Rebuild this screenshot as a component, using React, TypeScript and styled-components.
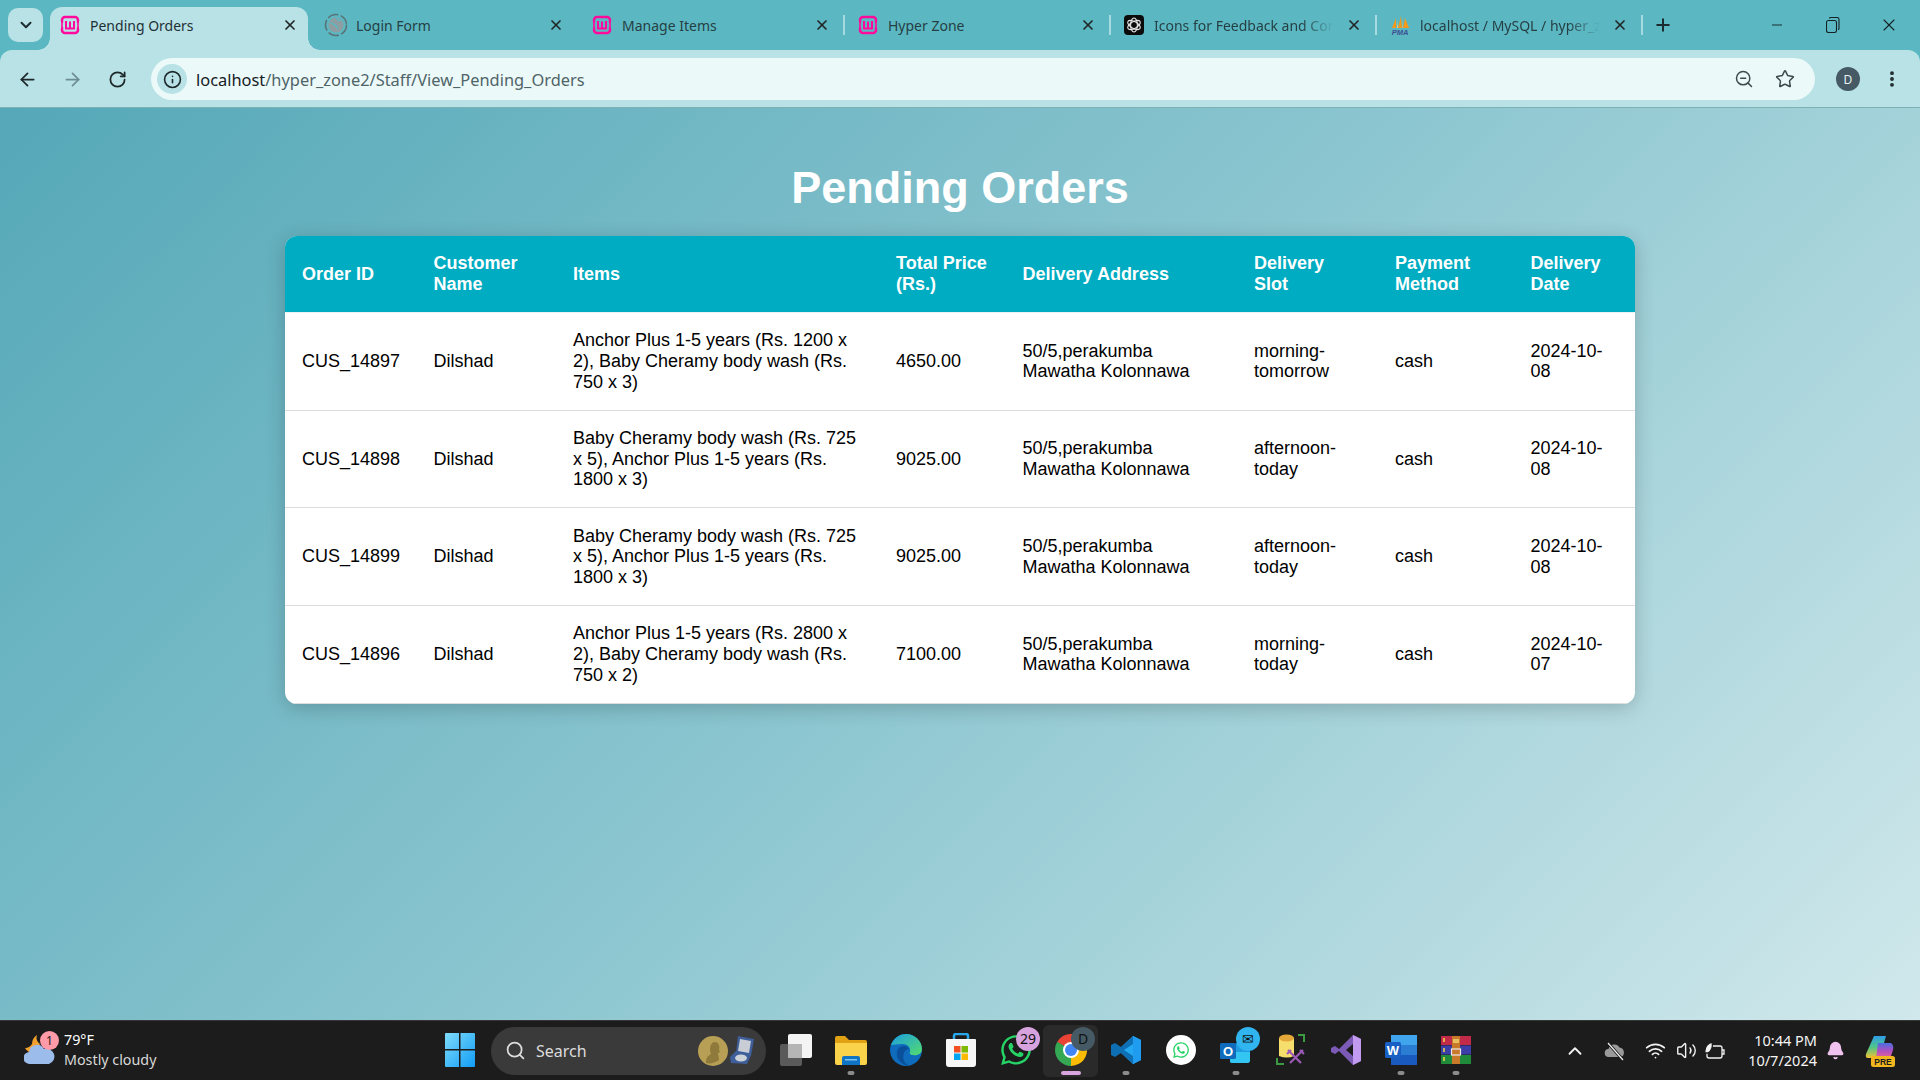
import React from "react"
import styled, { createGlobalStyle } from "styled-components"
import {
    ArrowLeft,
    ArrowRight,
    Bell,
    ChevronDown,
    ChevronUp,
    EllipsisVertical,
    Info,
    Minus,
    Plus,
    RotateCw,
    Search,
    Star,
    Volume2,
    Wifi,
    X,
    ZoomOut,
} from "lucide-react"
import { FaWhatsapp } from "react-icons/fa"

const GlobalStyle = createGlobalStyle`
    html, body {
        margin: 0;
        padding: 0;
        height: 100%;
        overflow: hidden;
    }
    * {
        box-sizing: border-box;
    }
`

const Shell = styled.div`
    width: 1920px;
    height: 1080px;
    display: flex;
    flex-direction: column;
    font-family: "Noto Sans", "Open Sans", sans-serif;
`

/* browser chrome */
const Chrome = styled.div`
    background: #5bb8c2;
`

const TabStrip = styled.div`
    height: 50px;
    display: flex;
    align-items: stretch;
    padding-right: 3px;
`

const TabSearch = styled.div`
    width: 35px;
    height: 34px;
    margin: 8px 3px 8px 8px;
    border-radius: 10px;
    background: #b8e2e6;
    color: #1d2b2e;
    display: flex;
    align-items: center;
    justify-content: center;
`

const Tab = styled.div<{ $active?: boolean; $sep?: boolean }>`
    position: relative;
    width: 266px;
    padding: 0 14px;
    display: flex;
    align-items: center;
    gap: 10px;
    color: ${(p) => (p.$active ? "#1f3034" : "#263f44")};

    &::before {
        content: "";
        display: ${(p) => (p.$active ? "block" : "none")};
        position: absolute;
        left: 4px;
        right: 4px;
        top: 7px;
        bottom: 0;
        background: #b8e2e6;
        border-radius: 12px 12px 0 0;
    }

    &::after {
        content: "";
        display: ${(p) => (p.$sep ? "block" : "none")};
        position: absolute;
        right: -1px;
        top: 15px;
        width: 2px;
        height: 20px;
        background: #a5dbe0;
    }

    & > * {
        position: relative;
    }
`

const Flare = styled.span<{ $side: "left" | "right" }>`
    && {
        position: absolute;
    }
    bottom: 0;
    ${(p) => (p.$side === "left" ? "left: -8px;" : "right: -8px;")}
    width: 12px;
    height: 12px;
    background: radial-gradient(
        circle at ${(p) => (p.$side === "left" ? "0 0" : "100% 0")},
        transparent 11.5px,
        #b8e2e6 12px
    );
`

const TabTitle = styled.span<{ $fade?: boolean }>`
    flex: 1;
    min-width: 0;
    font-size: 14px;
    white-space: nowrap;
    overflow: hidden;
    margin-right: 2px;
    ${(p) =>
        p.$fade
            ? "-webkit-mask-image: linear-gradient(to right, #000 82%, transparent 100%); mask-image: linear-gradient(to right, #000 82%, transparent 100%);"
            : ""}
`

const TabClose = styled(X)`
    flex: none;
    color: #22282a;
`

const NewTab = styled.div`
    width: 42px;
    display: flex;
    align-items: center;
    justify-content: center;
    color: #1c2b2e;
`

const WindowControls = styled.div`
    margin-left: auto;
    display: flex;
`

const WindowButton = styled.div`
    width: 56px;
    display: flex;
    align-items: center;
    justify-content: center;
    color: #142225;
`

const Toolbar = styled.div`
    height: 58px;
    background: #b8e2e6;
    border-radius: 12px 12px 0 0;
    border-bottom: 1px solid #7fb0b6;
    display: flex;
    align-items: center;
    padding: 1px 5px 0;
`

const NavButton = styled.div<{ $dim?: boolean }>`
    width: 45px;
    height: 40px;
    display: flex;
    align-items: center;
    justify-content: center;
    color: ${(p) => (p.$dim ? "#6d8d92" : "#1d2729")};
`

const Omnibox = styled.div`
    width: 1664px;
    height: 42px;
    margin-left: 11px;
    border-radius: 21px;
    background: #ecf9f9;
    display: flex;
    align-items: center;
    padding: 0 10px 0 6px;
`

const SiteInfo = styled.div`
    width: 30px;
    height: 30px;
    border-radius: 50%;
    background: #b8e2e6;
    color: #1d2729;
    display: flex;
    align-items: center;
    justify-content: center;
`

const Url = styled.div`
    flex: 1;
    margin-left: 9px;
    font-size: 16.4px;
    color: #4f6468;

    b {
        font-weight: 400;
        color: #15201f;
    }
`

const OmniAction = styled.div`
    width: 41px;
    display: flex;
    justify-content: center;
    color: #3e4b4e;
`

const Avatar = styled.div`
    width: 24px;
    height: 24px;
    margin-left: 21px;
    border-radius: 50%;
    background: #455a64;
    color: #e8f2f3;
    font-size: 12px;
    display: flex;
    align-items: center;
    justify-content: center;
`

const MenuButton = styled.div`
    width: 40px;
    margin-left: 12px;
    display: flex;
    justify-content: center;
    color: #1d2729;
`

/* page */
const Page = styled.main`
    flex: 1;
    min-height: 0;
    padding-top: 53px;
    background: linear-gradient(135deg, #55a8b8 0%, #8cc6d0 50%, #d0e8eb 100%);
    font-family: "Liberation Sans", Arial, sans-serif;
`

const Heading = styled.h1`
    margin: 0 0 21px;
    text-align: center;
    font-size: 45px;
    line-height: 54px;
    font-weight: 700;
    color: #ffffff;
`

const TableCard = styled.div`
    width: 1350px;
    margin: 0 auto;
    background: #ffffff;
    border-radius: 12px;
    overflow: hidden;
    box-shadow: 0 4px 20px rgba(0, 0, 0, 0.2);
`

const OrdersTable = styled.table`
    width: 100%;
    table-layout: fixed;
    border-collapse: collapse;
    font-size: 18px;
    line-height: 20.7px;
`

const HeadCell = styled.th`
    padding: 17px;
    background: #00acc1;
    color: #ffffff;
    font-weight: 700;
    line-height: 21px;
    text-align: left;
    border-bottom: 1px solid #e7f3f5;
    height: 76px;
`

const Row = styled.tr`
    td {
        border-bottom: 1px solid #dddddd;
    }
`

const Cell = styled.td`
    padding: 17.3px 17px;
    color: #000000;
    text-align: left;
    vertical-align: middle;
`

/* taskbar */
const Taskbar = styled.footer`
    height: 60px;
    background: #1c1c1c;
    border-top: 1px solid #363636;
    display: flex;
    align-items: center;
    padding-right: 13px;
    color: #ffffff;
`

const Weather = styled.div`
    width: 432px;
    height: 100%;
    padding-left: 24px;
    display: flex;
    align-items: center;
    gap: 9px;
`

const WeatherIcon = styled.div`
    position: relative;
    width: 31px;
    height: 38px;
`

const WeatherBadge = styled.span`
    position: absolute;
    top: -1px;
    right: -4px;
    width: 19px;
    height: 19px;
    border-radius: 50%;
    background: #ff9aa8;
    color: #1a1a1a;
    font-size: 12px;
    line-height: 19px;
    text-align: center;
`

const WeatherText = styled.div`
    font-size: 14.3px;
    line-height: 20px;
    margin-top: -2px;
    color: #d8d8d8;

    b {
        display: block;
        font-weight: 400;
        color: #ffffff;
    }
`

const Dock = styled.div`
    display: flex;
    align-items: center;
    height: 100%;
`

const DockItem = styled.div<{ $active?: boolean }>`
    position: relative;
    width: 55px;
    height: 52px;
    border-radius: 6px;
    display: flex;
    align-items: center;
    justify-content: center;
    background: ${(p) => (p.$active ? "#2a2a2a" : "transparent")};
    padding-bottom: 2px;
`

const RunDot = styled.span<{ $active?: boolean }>`
    position: absolute;
    bottom: 2px;
    left: 50%;
    transform: translateX(-50%);
    width: ${(p) => (p.$active ? "20px" : "7px")};
    height: 4px;
    border-radius: 2px;
    background: ${(p) => (p.$active ? "#d9a5e0" : "#8c8c8c")};
`

const CountBadge = styled.span<{ $bg: string }>`
    position: absolute;
    top: 2px;
    right: 3px;
    min-width: 24px;
    height: 24px;
    border-radius: 50%;
    background: ${(p) => p.$bg};
    color: #111111;
    font-size: 14px;
    line-height: 24px;
    text-align: center;
    display: flex;
    align-items: center;
    justify-content: center;
`

const SearchBox = styled.div`
    width: 275px;
    height: 48px;
    margin: 0 2px 0 4px;
    border-radius: 24px;
    background: #3a3a3a;
    display: flex;
    align-items: center;
    padding: 0 8px 0 14px;
    gap: 10px;
    font-size: 16px;
    color: #dcdcdc;
`

const SearchLabel = styled.span`
    flex: 1;
`

const Tray = styled.div`
    margin-left: auto;
    display: flex;
    align-items: center;
    height: 100%;
`

const TrayIcon = styled.div<{ $w: number }>`
    width: ${(p) => p.$w}px;
    display: flex;
    justify-content: center;
    color: #f2f2f2;
`

const Clock = styled.div`
    width: 89px;
    font-size: 14.5px;
    line-height: 20px;
    margin-top: -1px;
    text-align: right;
    white-space: nowrap;
    color: #f5f5f5;
`

/* logo drawings */
const WampIcon = () => (
    <svg width="20" height="20" viewBox="0 0 20 20" style={{ flex: "none" }}>
        <path
            d="M2 6V5a3 3 0 0 1 3-3h10a3 3 0 0 1 3 3v1M2 14v1a3 3 0 0 0 3 3h10a3 3 0 0 0 3-3v-1M1 6.5h2.2M16.8 6.5H19M1 13.5h2.2M16.8 13.5H19"
            fill="none"
            stroke="#ff0a9c"
            strokeWidth="2.500"
        />
        <path d="M2 6v8M18 6v8" stroke="#ff0a9c" strokeWidth="1.600" />
        <path d="M6 6v7.500h8V6M10 6.500v7" fill="none" stroke="#ff0a9c" strokeWidth="2" />
    </svg>
)

const LoadingIcon = () => (
    <svg width="24" height="24" viewBox="0 0 24 24" style={{ flex: "none", margin: "0 -2px" }}>
        <circle cx="12" cy="12" r="10.5" fill="none" stroke="#5b7377" strokeWidth="1.6" strokeDasharray="11 2.5" />
        <circle cx="12" cy="12" r="7.5" fill="#8d9ea2" />
        <path d="M6 10c3-1 3 2 5 2s1 3 3 4M13 5c-1 2 2 3 4 2" fill="none" stroke="#5bb8c2" strokeWidth="1.4" />
    </svg>
)

const GptIcon = () => (
    <svg width="20" height="20" viewBox="0 0 20 20" style={{ flex: "none" }}>
        <rect width="20" height="20" rx="4" fill="#0b0b0b" />
        <g fill="none" stroke="#e6e6e6" strokeWidth="1.1">
            <ellipse cx="10" cy="10" rx="3.4" ry="7" />
            <ellipse cx="10" cy="10" rx="3.4" ry="7" transform="rotate(60 10 10)" />
            <ellipse cx="10" cy="10" rx="3.4" ry="7" transform="rotate(120 10 10)" />
        </g>
    </svg>
)

const PmaIcon = () => (
    <svg width="22" height="20" viewBox="0 0 22 20" style={{ flex: "none", margin: "0 -1px" }}>
        <path d="M3 13 7 3v10zM9 13l3-12 1 12zM14 13l2-10 4 10z" fill="#f39a1d" />
        <path d="M8 13l1-7v7zM13.5 13l.5-9v9z" fill="#ffd27a" />
        <text x="11" y="19.5" textAnchor="middle" fontFamily="Liberation Sans" fontSize="7.5" fontWeight="700" fontStyle="italic" fill="#3d4e93">
            PMA
        </text>
    </svg>
)

const RestoreIcon = () => (
    <svg width="14" height="16" viewBox="0 0 14 16" fill="none" stroke="#142225" strokeWidth="1.1">
        <rect x="0.5" y="3.5" width="10" height="12" rx="2" />
        <path d="M3.5 1.5q0-1 1-1h6.5q2 0 2 2v9q0 1-1 1" />
    </svg>
)

const WeatherGlyph = () => (
    <svg width="31" height="38" viewBox="0 0 31 38">
        <path d="M1 16a10 10 0 0 0 9 5l6-9a8 8 0 0 1-3-9 11 11 0 0 0-5 9 9 9 0 0 1-7 4z" fill="#f2a12e" />
        <path d="M6 32a6 6 0 0 1-1-12 8 8 0 0 1 15-3 7.500 7.500 0 0 1 5 15z" fill="#9cbcec" />
    </svg>
)

const WindowsLogo = () => (
    <svg width="30" height="36" viewBox="0 0 30 36">
        <defs>
            <linearGradient id="win" x1="0" y1="0" x2="1" y2="1">
                <stop offset="0" stopColor="#7fdcfb" />
                <stop offset="1" stopColor="#119cf5" />
            </linearGradient>
        </defs>
        <path d="M0 2q0-1 1-1h13v16H0zM15.500 1H29q1 0 1 1v15H15.500zM0 18.500h14V35H1q-1 0-1-1zM15.500 18.500H30V34q0 1-1 1H15.500z" fill="url(#win)" />
    </svg>
)

const Medal = () => (
    <svg width="62" height="36" viewBox="0 0 62 36">
        <circle cx="17" cy="18" r="15" fill="#b79f55" />
        <path d="M10 30c0-6 2-7 5-9-2-4-1-12 4-12 4 0 5 5 4 8l1 2-2 1 1 7c-4 3-9 4-13 3z" fill="#8f7a3c" />
        <g transform="translate(-4 0)">
            <path d="M46 3l16 3-3 17-15-3z" fill="#3f5f9a" />
            <path d="M48 6l11 2-2 12-11-2z" fill="#c9ced6" />
            <path d="M38 24l6-6 15 4-4 9-16-1z" fill="#3f5f9a" />
            <ellipse cx="49" cy="25" rx="6" ry="3.500" fill="#cdd2d8" />
        </g>
    </svg>
)

const TaskViewIcon = () => (
    <svg width="32" height="32" viewBox="0 0 32 32">
        <rect x="0" y="10" width="22" height="22" rx="2" fill="#5a5a5a" />
        <rect x="8" y="0" width="24" height="24" rx="2" fill="#f4f4f4" />
        <rect x="8" y="10" width="14" height="14" fill="#b5b5b5" />
    </svg>
)

const FolderIcon = () => (
    <svg width="32" height="30" viewBox="0 0 32 30">
        <path d="M0 3q0-2 2-2h8l4 4h16q2 0 2 2v4H0z" fill="#e0a213" />
        <path d="M0 8h32v20q0 2-2 2H2q-2 0-2-2z" fill="#fbd34b" />
        <path d="M7 30v-7q0-2 2-2h14q2 0 2 2v7z" fill="#0f74c4" />
        <rect x="10" y="24" width="12" height="1.500" fill="#7cc2f0" />
    </svg>
)

const EdgeIcon = () => (
    <svg width="32" height="32" viewBox="0 0 32 32">
        <defs>
            <linearGradient id="edgeTop" x1="0" y1="0" x2="1" y2="1">
                <stop offset="0" stopColor="#1b9de2" />
                <stop offset="1" stopColor="#54dc6b" />
            </linearGradient>
        </defs>
        <circle cx="16" cy="16" r="16" fill="#0f6cbd" />
        <path d="M1 11C4 3 11 0 16 0c9 0 16 7 16 15 0 5-5 7-9 6-3 0-4-2-3-3 1-4-2-8-7-8-5 0-10 1-12 1z" fill="url(#edgeTop)" />
        <path d="M14 12c-5 0-8 4-7 10 1 5 6 9 12 10-5-3-7-8-5-13 1-3 3-4 5-4-1-2-3-3-5-3z" fill="#0a4f9a" />
    </svg>
)

const StoreIcon = () => (
    <svg width="30" height="34" viewBox="0 0 30 34">
        <path d="M8 8V3q0-2 2-2h10q2 0 2 2v5" fill="none" stroke="#28a8ea" strokeWidth="2.500" />
        <path d="M1 6h28q1 0 1 1v24q0 3-3 3H3q-3 0-3-3V7q0-1 1-1z" fill="#f7f7f7" />
        <rect x="8" y="13" width="6.500" height="6.500" fill="#f25022" />
        <rect x="15.500" y="13" width="6.500" height="6.500" fill="#7fba00" />
        <rect x="8" y="20.500" width="6.500" height="6.500" fill="#00a4ef" />
        <rect x="15.500" y="20.500" width="6.500" height="6.500" fill="#ffb900" />
    </svg>
)

const ChromeIcon = () => (
    <svg width="32" height="32" viewBox="-16 -16 32 32">
        <circle r="11.500" fill="none" stroke="#ea4335" strokeWidth="9" strokeDasharray="24.100 48.200" transform="rotate(210)" />
        <circle r="11.500" fill="none" stroke="#fbbc04" strokeWidth="9" strokeDasharray="24.100 48.200" transform="rotate(330)" />
        <circle r="11.500" fill="none" stroke="#34a853" strokeWidth="9" strokeDasharray="24.100 48.200" transform="rotate(90)" />
        <circle r="8" fill="#ffffff" />
        <circle r="6" fill="#4285f4" />
    </svg>
)

const VsCodeIcon = () => (
    <svg width="30" height="30" viewBox="0 0 30 30">
        <path d="M22 1l8 4v20l-8 4L7 15z" fill="#23a9f1" />
        <path d="M22 1 10 12 4 8 0 10v10l4 2 6-4 12 11v-8l-9-6 9-6z" fill="#0f6fb5" />
        <path d="M22 1l8 4v20l-8 4z" fill="#1f9cf0" />
    </svg>
)

const WhatsAppBadge = () => (
    <svg width="30" height="30" viewBox="0 0 30 30">
        <circle cx="15" cy="15" r="15" fill="#ffffff" />
        <foreignObject x="6" y="6" width="18" height="18">
            <FaWhatsapp size={18} color="#25d366" />
        </foreignObject>
    </svg>
)

const OutlookIcon = () => (
    <svg width="32" height="32" viewBox="0 0 32 32">
        <path d="M10 14 26 2h4v24q0 3-3 3H12q-2 0-2-2z" fill="#1f9de0" />
        <path d="M10 18h20v8q0 3-3 3H12q-2 0-2-2z" fill="#33c6f3" />
        <rect x="0" y="9" width="16" height="16" rx="1.500" fill="#0f6cbd" />
        <text x="8" y="22" textAnchor="middle" fontFamily="Liberation Sans" fontSize="13" fontWeight="700" fill="#ffffff">
            O
        </text>
    </svg>
)

const DbToolIcon = () => (
    <svg width="30" height="32" viewBox="0 0 30 32">
        <path d="M3 4h15v18q-7 3-15 0z" fill="#f6de6d" />
        <ellipse cx="10.500" cy="4" rx="7.500" ry="3.500" fill="#e5a63a" />
        <path d="M22 1h6v7M1 24v6h7" fill="none" stroke="#3c9a42" strokeWidth="2" />
        <path d="M12 16l13 13M27 16 14 29M11 20l4-4M28 20l-4-4" fill="none" stroke="#9c59b6" strokeWidth="2.200" />
    </svg>
)

const VisualStudioIcon = () => (
    <svg width="30" height="30" viewBox="0 0 30 30">
        <path d="M22 0l8 4v22l-8 4L8 16l-4 3-4-2V13l4-2 4 3z" fill="#7b5bb6" />
        <path d="M22 0l8 4v22l-8 4z" fill="#c29bf0" />
        <path d="M22 9v12l-7-6z" fill="#1c1c1c" />
    </svg>
)

const WordIcon = () => (
    <svg width="32" height="30" viewBox="0 0 32 30">
        <rect x="6" y="0" width="26" height="10" fill="#41a5ee" />
        <rect x="6" y="10" width="26" height="10" fill="#2b7cd3" />
        <rect x="6" y="20" width="26" height="10" fill="#185abd" />
        <rect x="0" y="7" width="16" height="16" rx="1.500" fill="#1a5fc4" />
        <text x="8" y="20" textAnchor="middle" fontFamily="Liberation Sans" fontSize="13" fontWeight="700" fill="#ffffff">
            W
        </text>
    </svg>
)

const RarIcon = () => (
    <svg width="30" height="28" viewBox="0 0 30 28">
        <rect y="0" width="30" height="9" fill="#c22a4a" />
        <rect y="9.500" width="30" height="9" fill="#3c3ea8" />
        <rect y="19" width="30" height="9" fill="#1e8a3a" />
        <rect x="11" y="0" width="8" height="28" fill="#c9792a" />
        <rect x="12" y="3" width="6" height="4" fill="#e8c060" />
        <rect x="10.500" y="13" width="9" height="6" fill="none" stroke="#e9e9e9" strokeWidth="1.200" />
        <path d="M3 2v4M3 12v4M3 21v4" stroke="#f5d94a" strokeWidth="1.500" />
    </svg>
)

const CloudOffIcon = () => (
    <svg width="22" height="22" viewBox="0 0 22 22">
        <path d="M5 17a4 4 0 0 1-.5-8 6 6 0 0 1 11-1.500A5 5 0 0 1 17 17z" fill="#9a9a9a" />
        <path d="M4 3l15 17" stroke="#1c1c1c" strokeWidth="3" />
        <path d="M4 3l15 17" stroke="#f2f2f2" strokeWidth="1.200" />
    </svg>
)

const BatteryLeafIcon = () => (
    <svg width="22" height="20" viewBox="0 0 22 20" fill="none" stroke="#f2f2f2" strokeWidth="1.300">
        <rect x="3" y="5" width="15" height="12" rx="2" />
        <path d="M18 9h2v4h-2" />
        <path d="M1 12C0 6 4 2 8 1c1 4 0 9-4 11z" fill="#f2f2f2" stroke="#1c1c1c" />
    </svg>
)

const CopilotIcon = () => (
    <svg width="30" height="32" viewBox="0 0 30 32">
        <defs>
            <linearGradient id="copL" x1="0" y1="0" x2="0" y2="1">
                <stop offset="0" stopColor="#2f9ce8" />
                <stop offset="0.500" stopColor="#4dc68a" />
                <stop offset="1" stopColor="#f2c230" />
            </linearGradient>
            <linearGradient id="copR" x1="0" y1="0" x2="0" y2="1">
                <stop offset="0" stopColor="#4a6fe0" />
                <stop offset="0.500" stopColor="#b14fc0" />
                <stop offset="1" stopColor="#ee6a8c" />
            </linearGradient>
        </defs>
        <path d="M9 1h12l-4 14q-2 8-7 8H3Q0 23 1 19z" fill="url(#copL)" />
        <path d="M13 8h13q3 2 2 7l-2 6q-2 3-6 3H11z" fill="url(#copR)" />
        <rect x="6" y="21" width="24" height="11" rx="2.500" fill="#f2b71f" />
        <text x="18" y="29.500" textAnchor="middle" fontFamily="Liberation Sans" fontSize="8.500" fontWeight="700" fill="#1c1c1c">
            PRE
        </text>
    </svg>
)

/* data */
const tabs = [
    { title: "Pending Orders", icon: <WampIcon />, active: true },
    { title: "Login Form", icon: <LoadingIcon /> },
    { title: "Manage Items", icon: <WampIcon />, sep: true },
    { title: "Hyper Zone", icon: <WampIcon />, sep: true },
    { title: "Icons for Feedback and Comments", icon: <GptIcon />, sep: true, fade: true },
    { title: "localhost / MySQL / hyper_zone", icon: <PmaIcon />, sep: true, fade: true },
]

const columns = [
    { label: "Order ID", width: 131.5 },
    { label: "Customer Name", width: 139.5 },
    { label: "Items", width: 323 },
    { label: "Total Price (Rs.)", width: 126.5 },
    { label: "Delivery Address", width: 231.5 },
    { label: "Delivery Slot", width: 141 },
    { label: "Payment Method", width: 135.5 },
    { label: "Delivery Date", width: 121.5 },
]

const address = "50/5,perakumba Mawatha Kolonnawa"

const orders = [
    ["CUS_14897", "Dilshad", "Anchor Plus 1-5 years (Rs. 1200 x 2), Baby Cheramy body wash (Rs. 750 x 3)", "4650.00", address, "morning-tomorrow", "cash", "2024-10-08"],
    ["CUS_14898", "Dilshad", "Baby Cheramy body wash (Rs. 725 x 5), Anchor Plus 1-5 years (Rs. 1800 x 3)", "9025.00", address, "afternoon-today", "cash", "2024-10-08"],
    ["CUS_14899", "Dilshad", "Baby Cheramy body wash (Rs. 725 x 5), Anchor Plus 1-5 years (Rs. 1800 x 3)", "9025.00", address, "afternoon-today", "cash", "2024-10-08"],
    ["CUS_14896", "Dilshad", "Anchor Plus 1-5 years (Rs. 2800 x 2), Baby Cheramy body wash (Rs. 750 x 2)", "7100.00", address, "morning-today", "cash", "2024-10-07"],
]

const App: React.FC = () => {
    return (
        <Shell>
            <GlobalStyle />
            <Chrome>
                <TabStrip>
                    <TabSearch>
                        <ChevronDown size={18} strokeWidth={2.6} />
                    </TabSearch>
                    {tabs.map((tab) => (
                        <Tab key={tab.title} $active={tab.active} $sep={tab.sep}>
                            {tab.active && <Flare $side="left" />}
                            {tab.active && <Flare $side="right" />}
                            {tab.icon}
                            <TabTitle $fade={tab.fade}>{tab.title}</TabTitle>
                            <TabClose size={16} strokeWidth={2.6} />
                        </Tab>
                    ))}
                    <NewTab>
                        <Plus size={20} strokeWidth={2.4} />
                    </NewTab>
                    <WindowControls>
                        <WindowButton>
                            <Minus size={16} strokeWidth={1.4} />
                        </WindowButton>
                        <WindowButton>
                            <RestoreIcon />
                        </WindowButton>
                        <WindowButton>
                            <X size={20} strokeWidth={1.3} />
                        </WindowButton>
                    </WindowControls>
                </TabStrip>
                <Toolbar>
                    <NavButton>
                        <ArrowLeft size={21} strokeWidth={2} />
                    </NavButton>
                    <NavButton $dim>
                        <ArrowRight size={21} strokeWidth={2} />
                    </NavButton>
                    <NavButton>
                        <RotateCw size={19} strokeWidth={2.2} />
                    </NavButton>
                    <Omnibox>
                        <SiteInfo>
                            <Info size={19} strokeWidth={2} />
                        </SiteInfo>
                        <Url>
                            <b>localhost</b>/hyper_zone2/Staff/View_Pending_Orders
                        </Url>
                        <OmniAction>
                            <ZoomOut size={20} strokeWidth={1.8} />
                        </OmniAction>
                        <OmniAction>
                            <Star size={20} strokeWidth={1.8} />
                        </OmniAction>
                    </Omnibox>
                    <Avatar>D</Avatar>
                    <MenuButton>
                        <EllipsisVertical size={20} strokeWidth={2.6} />
                    </MenuButton>
                </Toolbar>
            </Chrome>

            <Page>
                <Heading>Pending Orders</Heading>
                <TableCard>
                    <OrdersTable>
                        <colgroup>
                            {columns.map((col) => (
                                <col key={col.label} style={{ width: col.width }} />
                            ))}
                        </colgroup>
                        <thead>
                            <tr>
                                {columns.map((col) => (
                                    <HeadCell key={col.label}>{col.label}</HeadCell>
                                ))}
                            </tr>
                        </thead>
                        <tbody>
                            {orders.map((order) => (
                                <Row key={order[0]}>
                                    {order.map((value, i) => (
                                        <Cell key={i}>{value}</Cell>
                                    ))}
                                </Row>
                            ))}
                        </tbody>
                    </OrdersTable>
                </TableCard>
            </Page>

            <Taskbar>
                <Weather>
                    <WeatherIcon>
                        <WeatherGlyph />
                        <WeatherBadge>1</WeatherBadge>
                    </WeatherIcon>
                    <WeatherText>
                        <b>79°F</b>
                        Mostly cloudy
                    </WeatherText>
                </Weather>
                <Dock>
                    <DockItem>
                        <WindowsLogo />
                    </DockItem>
                    <SearchBox>
                        <Search size={21} strokeWidth={2} />
                        <SearchLabel>Search</SearchLabel>
                        <Medal />
                    </SearchBox>
                    <DockItem>
                        <TaskViewIcon />
                    </DockItem>
                    <DockItem>
                        <FolderIcon />
                        <RunDot />
                    </DockItem>
                    <DockItem>
                        <EdgeIcon />
                    </DockItem>
                    <DockItem>
                        <StoreIcon />
                    </DockItem>
                    <DockItem>
                        <FaWhatsapp size={34} color="#25d366" />
                        <CountBadge $bg="#d7a3de">29</CountBadge>
                    </DockItem>
                    <DockItem $active>
                        <ChromeIcon />
                        <CountBadge $bg="#455a64">D</CountBadge>
                        <RunDot $active />
                    </DockItem>
                    <DockItem>
                        <VsCodeIcon />
                        <RunDot />
                    </DockItem>
                    <DockItem>
                        <WhatsAppBadge />
                    </DockItem>
                    <DockItem>
                        <OutlookIcon />
                        <CountBadge $bg="#30b5f0">✉</CountBadge>
                        <RunDot />
                    </DockItem>
                    <DockItem>
                        <DbToolIcon />
                    </DockItem>
                    <DockItem>
                        <VisualStudioIcon />
                    </DockItem>
                    <DockItem>
                        <WordIcon />
                        <RunDot />
                    </DockItem>
                    <DockItem>
                        <RarIcon />
                        <RunDot />
                    </DockItem>
                </Dock>
                <Tray>
                    <TrayIcon $w={30}>
                        <ChevronUp size={22} strokeWidth={2} />
                    </TrayIcon>
                    <TrayIcon $w={50}>
                        <CloudOffIcon />
                    </TrayIcon>
                    <TrayIcon $w={30}>
                        <Wifi size={21} strokeWidth={2} />
                    </TrayIcon>
                    <TrayIcon $w={32}>
                        <Volume2 size={21} strokeWidth={1.6} />
                    </TrayIcon>
                    <TrayIcon $w={26}>
                        <BatteryLeafIcon />
                    </TrayIcon>
                    <Clock>
                        10:44 PM
                        <br />
                        10/7/2024
                    </Clock>
                    <TrayIcon $w={36}>
                        <Bell size={19} color="#efc2ef" fill="#efc2ef" />
                    </TrayIcon>
                    <TrayIcon $w={54}>
                        <CopilotIcon />
                    </TrayIcon>
                </Tray>
            </Taskbar>
        </Shell>
    )
}

export default App
